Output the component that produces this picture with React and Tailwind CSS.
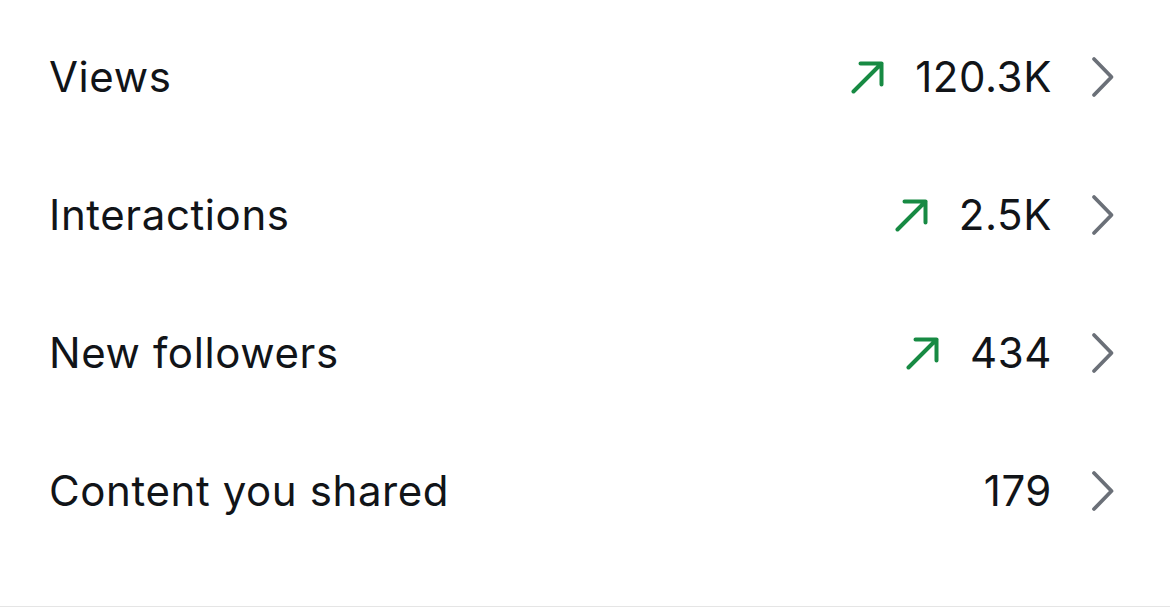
const rows = [
  { label: 'Views', value: '120.3K', up: true },
  { label: 'Interactions', value: '2.5K', up: true },
  { label: 'New followers', value: '434', up: true },
  { label: 'Content you shared', value: '179', up: false },
];

function TrendUp() {
  return (
    <svg width="34" height="34" viewBox="0 0 34 34" fill="none" className="mr-[30px] shrink-0">
      <path
        d="M2.5 31.5 L30.5 3.5 M9.5 3.5 H30.5 V24.5"
        stroke="#178a43"
        strokeWidth="4"
        strokeLinecap="round"
        strokeLinejoin="round"
      />
    </svg>
  );
}

function Chevron() {
  return (
    <svg width="26" height="44" viewBox="0 0 26 44" fill="none" className="ml-[38px] shrink-0">
      <path
        d="M4 4 L21.5 22 L4 40"
        stroke="#6b7078"
        strokeWidth="3.8"
        strokeLinecap="round"
        strokeLinejoin="round"
      />
    </svg>
  );
}

export default function App() {
  return (
    <div className="w-[1170px] h-[616px] bg-white font-['Inter',sans-serif] text-[#111418]">
      <div className="pt-2 pb-[46px] border-b border-[#e5e5e5]">
        {rows.map((row) => (
          <div key={row.label} className="h-[138px] flex items-center justify-between pl-[49px] pr-[54px]">
            <span className="text-[42px] leading-none tracking-[0.6px]">{row.label}</span>
            <div className="flex items-center">
              {row.up && <TrendUp />}
              <span className="text-[42px] leading-none tracking-[0.6px]">{row.value}</span>
              <Chevron />
            </div>
          </div>
        ))}
      </div>
    </div>
  );
}
